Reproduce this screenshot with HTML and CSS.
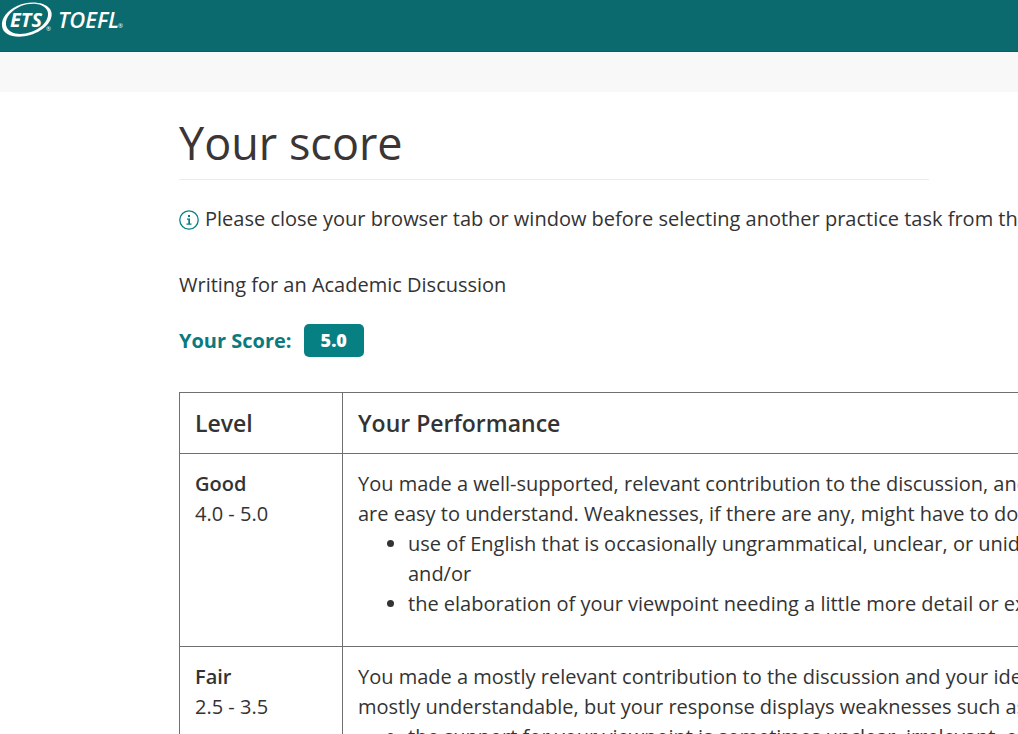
FILE: index.html
```html
<!DOCTYPE html>
<html lang="en">
<head>
<meta charset="utf-8">
<title>Your score</title>
<link rel="stylesheet" href="styles.css">
</head>
<body>
<header class="site-header">
  <svg class="logo" width="124" height="40" viewBox="0 0 124 40" role="img" aria-label="ETS TOEFL">
    <path fill="#fff" fill-rule="evenodd" d="M17 6C27 1 44 1 50 9C56 18 45 31 30 35C17 39 3 36 2 26C1 18 8 10 17 6ZM21 6C12 10 5 17 6 25C8 34 20 36 31 32C43 28 51 18 47 10C43 3 31 2 21 6Z"/>
    <text class="logo-ets" x="10" y="27">ETS</text>
    <text class="logo-toefl" x="58" y="28">TOEFL</text>
    <text class="logo-mark" x="46" y="31">®</text>
    <text class="logo-mark" x="118" y="28">®</text>
  </svg>
</header>
<div class="sub-bar"></div>
<main class="content">
  <h1 class="title">Your score</h1>
  <p class="notice">
    <svg class="info" width="20" height="22" viewBox="0 0 20 22" aria-hidden="true">
      <circle cx="10" cy="12" r="9.2" fill="none" stroke="#078083" stroke-width="1.3"/>
      <path d="M9 7h2v2H9zM8 10.500h3v5h1.500v1.200h-5v-1.200H9.300V11.700H8z" fill="#078083"/>
    </svg>
    <span>Please close your browser tab or window before selecting another practice task from the</span>
  </p>
  <p class="task">Writing for an Academic Discussion</p>
  <p class="score"><span>Your Score:</span><strong class="badge">5.0</strong></p>
  <table class="levels">
    <thead>
      <tr><th class="level" scope="col">Level</th><th scope="col">Your Performance</th></tr>
    </thead>
    <tbody>
      <tr>
        <td><b>Good</b><br>4.0 - 5.0</td>
        <td>You made a well-supported, relevant contribution to the discussion, and<br>are easy to understand. Weaknesses, if there are any, might have to do
          <ul>
            <li>use of English that is occasionally ungrammatical, unclear, or unidiomatic<br>and/or</li>
            <li>the elaboration of your viewpoint needing a little more detail or explanation</li>
          </ul>
        </td>
      </tr>
      <tr>
        <td><b>Fair</b><br>2.5 - 3.5</td>
        <td>You made a mostly relevant contribution to the discussion and your ideas<br>mostly understandable, but your response displays weaknesses such as
          <ul>
            <li>the support for your viewpoint is sometimes unclear, irrelevant, or</li>
          </ul>
        </td>
      </tr>
    </tbody>
  </table>
</main>
</body>
</html>
```
FILE: styles.css
```css
* { box-sizing: border-box; }
html { overflow: hidden; }
body {
  margin: 0;
  background: #fff;
  color: #333;
  font: 20px/30px "Open Sans", sans-serif;
}
.site-header { height: 52px; background: #0a6a6e; border-bottom: 1px solid #075f63; }
.logo { display: block; }
.logo text { fill: #fff; font-family: "Open Sans", sans-serif; font-style: italic; }
.logo .logo-ets { font-size: 20px; font-weight: 700; }
.logo .logo-toefl { font-size: 22px; font-weight: 600; }
.logo .logo-mark { font-size: 6px; font-style: normal; }
.sub-bar { height: 40px; background: #f8f8f8; }
.content { padding: 22px 0 0 179px; white-space: nowrap; }
.title {
  margin: 0 89px 24px 0;
  padding-bottom: 7px;
  border-bottom: 1px solid #ececec;
  color: #3b3536;
  font-size: 45px;
  font-weight: 400;
  line-height: 58px;
}
.notice { display: flex; align-items: center; gap: 6px; margin: 0 0 36px; }
.info { flex: none; }
.task { margin: 0 0 24px; }
.score { display: flex; align-items: center; gap: 12px; margin: 0 0 35px; color: #0b7a7e; font-weight: 700; }
.badge {
  padding: 1px 17px 2px;
  border-radius: 5px;
  background: #078083;
  color: #fff;
  font-size: 18px;
}
.levels { min-width: 100%; border-collapse: collapse; }
.levels th, .levels td { border: 1px solid #707070; padding: 15px; text-align: left; vertical-align: top; }
.levels th { font-size: 23px; font-weight: 600; }
.levels .level { min-width: 163px; }
.levels b { font-weight: 600; }
.levels ul { margin: 0 0 12px; padding-left: 50px; }
```
